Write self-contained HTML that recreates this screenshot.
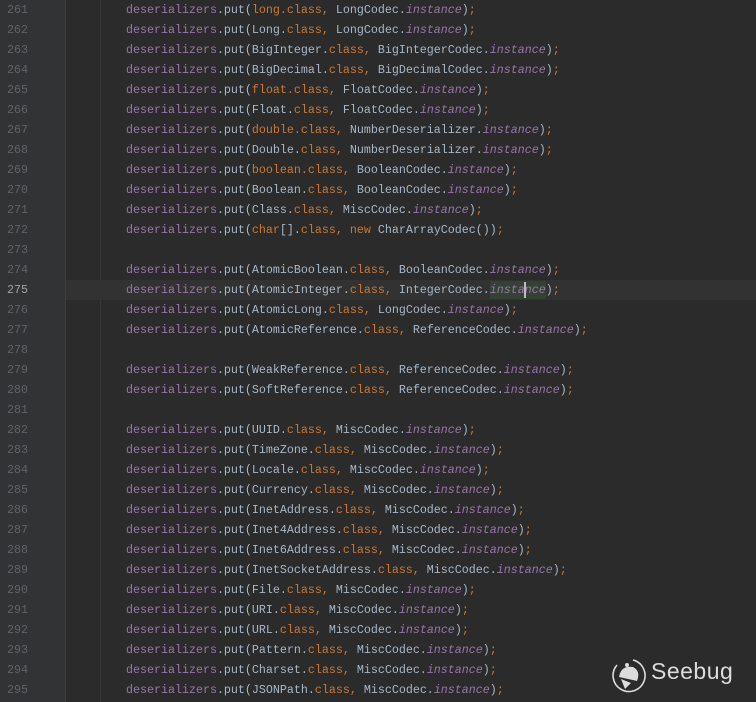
<!DOCTYPE html>
<html><head><meta charset="utf-8"><style>
*{margin:0;padding:0}
body{width:756px;height:702px;overflow:hidden;background:#2b2b2b;position:relative;font-family:"Liberation Mono",monospace;font-size:11.67px;color:#a9b7c6}
#g{position:absolute;left:0;top:0;width:65px;height:702px;background:#313335;border-right:1px solid #3c3f41}
#ig{position:absolute;left:100px;top:0;width:1px;height:702px;background:#373737}
.cur{position:absolute;left:66px;top:280px;width:690px;height:20px;background:#323232}
.hl{position:absolute;left:490px;top:281px;width:56px;height:18px;background:#344134}
.caret{position:absolute;left:524px;top:282px;width:2px;height:16px;background:#bbbbbb}
.ln{position:absolute;left:0;width:28px;text-align:right;color:#606366;line-height:20px;height:20px}
.c{position:absolute;left:126px;line-height:20px;height:20px;white-space:pre}
.v{color:#9876aa}.k{color:#cc7832}.i{color:#9876aa;font-style:italic}
.ln.a{color:#a4a3a3}
#logo{position:absolute;left:609px;top:655px;color:#dcdcdc}
</style></head><body>
<div id="g"></div><div id="ig"></div><div class="cur"></div><div class="hl"></div>
<div style="position:absolute;left:0;top:0">
<div class="ln" style="top:0">261</div><div class="c" style="top:0"><span class="v">deserializers</span>.put(<span class="k">long.class,</span> LongCodec.<span class="i">instance</span>)<span class="k">;</span></div>
<div class="ln" style="top:20px">262</div><div class="c" style="top:20px"><span class="v">deserializers</span>.put(Long.<span class="k">class,</span> LongCodec.<span class="i">instance</span>)<span class="k">;</span></div>
<div class="ln" style="top:40px">263</div><div class="c" style="top:40px"><span class="v">deserializers</span>.put(BigInteger.<span class="k">class,</span> BigIntegerCodec.<span class="i">instance</span>)<span class="k">;</span></div>
<div class="ln" style="top:60px">264</div><div class="c" style="top:60px"><span class="v">deserializers</span>.put(BigDecimal.<span class="k">class,</span> BigDecimalCodec.<span class="i">instance</span>)<span class="k">;</span></div>
<div class="ln" style="top:80px">265</div><div class="c" style="top:80px"><span class="v">deserializers</span>.put(<span class="k">float.class,</span> FloatCodec.<span class="i">instance</span>)<span class="k">;</span></div>
<div class="ln" style="top:100px">266</div><div class="c" style="top:100px"><span class="v">deserializers</span>.put(Float.<span class="k">class,</span> FloatCodec.<span class="i">instance</span>)<span class="k">;</span></div>
<div class="ln" style="top:120px">267</div><div class="c" style="top:120px"><span class="v">deserializers</span>.put(<span class="k">double.class,</span> NumberDeserializer.<span class="i">instance</span>)<span class="k">;</span></div>
<div class="ln" style="top:140px">268</div><div class="c" style="top:140px"><span class="v">deserializers</span>.put(Double.<span class="k">class,</span> NumberDeserializer.<span class="i">instance</span>)<span class="k">;</span></div>
<div class="ln" style="top:160px">269</div><div class="c" style="top:160px"><span class="v">deserializers</span>.put(<span class="k">boolean.class,</span> BooleanCodec.<span class="i">instance</span>)<span class="k">;</span></div>
<div class="ln" style="top:180px">270</div><div class="c" style="top:180px"><span class="v">deserializers</span>.put(Boolean.<span class="k">class,</span> BooleanCodec.<span class="i">instance</span>)<span class="k">;</span></div>
<div class="ln" style="top:200px">271</div><div class="c" style="top:200px"><span class="v">deserializers</span>.put(Class.<span class="k">class,</span> MiscCodec.<span class="i">instance</span>)<span class="k">;</span></div>
<div class="ln" style="top:220px">272</div><div class="c" style="top:220px"><span class="v">deserializers</span>.put(<span class="k">char</span>[].<span class="k">class, new</span> CharArrayCodec())<span class="k">;</span></div>
<div class="ln" style="top:240px">273</div>
<div class="ln" style="top:260px">274</div><div class="c" style="top:260px"><span class="v">deserializers</span>.put(AtomicBoolean.<span class="k">class,</span> BooleanCodec.<span class="i">instance</span>)<span class="k">;</span></div>
<div class="ln a" style="top:280px">275</div><div class="c" style="top:280px"><span class="v">deserializers</span>.put(AtomicInteger.<span class="k">class,</span> IntegerCodec.<span class="i">instance</span>)<span class="k">;</span></div>
<div class="ln" style="top:300px">276</div><div class="c" style="top:300px"><span class="v">deserializers</span>.put(AtomicLong.<span class="k">class,</span> LongCodec.<span class="i">instance</span>)<span class="k">;</span></div>
<div class="ln" style="top:320px">277</div><div class="c" style="top:320px"><span class="v">deserializers</span>.put(AtomicReference.<span class="k">class,</span> ReferenceCodec.<span class="i">instance</span>)<span class="k">;</span></div>
<div class="ln" style="top:340px">278</div>
<div class="ln" style="top:360px">279</div><div class="c" style="top:360px"><span class="v">deserializers</span>.put(WeakReference.<span class="k">class,</span> ReferenceCodec.<span class="i">instance</span>)<span class="k">;</span></div>
<div class="ln" style="top:380px">280</div><div class="c" style="top:380px"><span class="v">deserializers</span>.put(SoftReference.<span class="k">class,</span> ReferenceCodec.<span class="i">instance</span>)<span class="k">;</span></div>
<div class="ln" style="top:400px">281</div>
<div class="ln" style="top:420px">282</div><div class="c" style="top:420px"><span class="v">deserializers</span>.put(UUID.<span class="k">class,</span> MiscCodec.<span class="i">instance</span>)<span class="k">;</span></div>
<div class="ln" style="top:440px">283</div><div class="c" style="top:440px"><span class="v">deserializers</span>.put(TimeZone.<span class="k">class,</span> MiscCodec.<span class="i">instance</span>)<span class="k">;</span></div>
<div class="ln" style="top:460px">284</div><div class="c" style="top:460px"><span class="v">deserializers</span>.put(Locale.<span class="k">class,</span> MiscCodec.<span class="i">instance</span>)<span class="k">;</span></div>
<div class="ln" style="top:480px">285</div><div class="c" style="top:480px"><span class="v">deserializers</span>.put(Currency.<span class="k">class,</span> MiscCodec.<span class="i">instance</span>)<span class="k">;</span></div>
<div class="ln" style="top:500px">286</div><div class="c" style="top:500px"><span class="v">deserializers</span>.put(InetAddress.<span class="k">class,</span> MiscCodec.<span class="i">instance</span>)<span class="k">;</span></div>
<div class="ln" style="top:520px">287</div><div class="c" style="top:520px"><span class="v">deserializers</span>.put(Inet4Address.<span class="k">class,</span> MiscCodec.<span class="i">instance</span>)<span class="k">;</span></div>
<div class="ln" style="top:540px">288</div><div class="c" style="top:540px"><span class="v">deserializers</span>.put(Inet6Address.<span class="k">class,</span> MiscCodec.<span class="i">instance</span>)<span class="k">;</span></div>
<div class="ln" style="top:560px">289</div><div class="c" style="top:560px"><span class="v">deserializers</span>.put(InetSocketAddress.<span class="k">class,</span> MiscCodec.<span class="i">instance</span>)<span class="k">;</span></div>
<div class="ln" style="top:580px">290</div><div class="c" style="top:580px"><span class="v">deserializers</span>.put(File.<span class="k">class,</span> MiscCodec.<span class="i">instance</span>)<span class="k">;</span></div>
<div class="ln" style="top:600px">291</div><div class="c" style="top:600px"><span class="v">deserializers</span>.put(URI.<span class="k">class,</span> MiscCodec.<span class="i">instance</span>)<span class="k">;</span></div>
<div class="ln" style="top:620px">292</div><div class="c" style="top:620px"><span class="v">deserializers</span>.put(URL.<span class="k">class,</span> MiscCodec.<span class="i">instance</span>)<span class="k">;</span></div>
<div class="ln" style="top:640px">293</div><div class="c" style="top:640px"><span class="v">deserializers</span>.put(Pattern.<span class="k">class,</span> MiscCodec.<span class="i">instance</span>)<span class="k">;</span></div>
<div class="ln" style="top:660px">294</div><div class="c" style="top:660px"><span class="v">deserializers</span>.put(Charset.<span class="k">class,</span> MiscCodec.<span class="i">instance</span>)<span class="k">;</span></div>
<div class="ln" style="top:680px">295</div><div class="c" style="top:680px"><span class="v">deserializers</span>.put(JSONPath.<span class="k">class,</span> MiscCodec.<span class="i">instance</span>)<span class="k">;</span></div>
</div>
<div class="caret"></div>
<div id="logo">
<svg width="40" height="40" viewBox="0 0 40 40" style="position:absolute;left:0;top:0">
<path d="M24 5 A16 16 0 1 1 8 10" fill="none" stroke="#dcdcdc" stroke-width="1.6"/>
<path d="M10 22 Q12 10 24 12 Q32 16 28 26 Z" fill="#dcdcdc"/>
<path d="M12 24 L16 34 L22 28 Z" fill="#dcdcdc"/>
<circle cx="18" cy="10" r="2" fill="#dcdcdc"/>
</svg>
<div style="position:absolute;left:42px;top:3px;font-family:'Liberation Sans',sans-serif;font-size:23px;letter-spacing:0.5px;color:#dcdcdc">Seebug</div>
</div>
</body></html>
